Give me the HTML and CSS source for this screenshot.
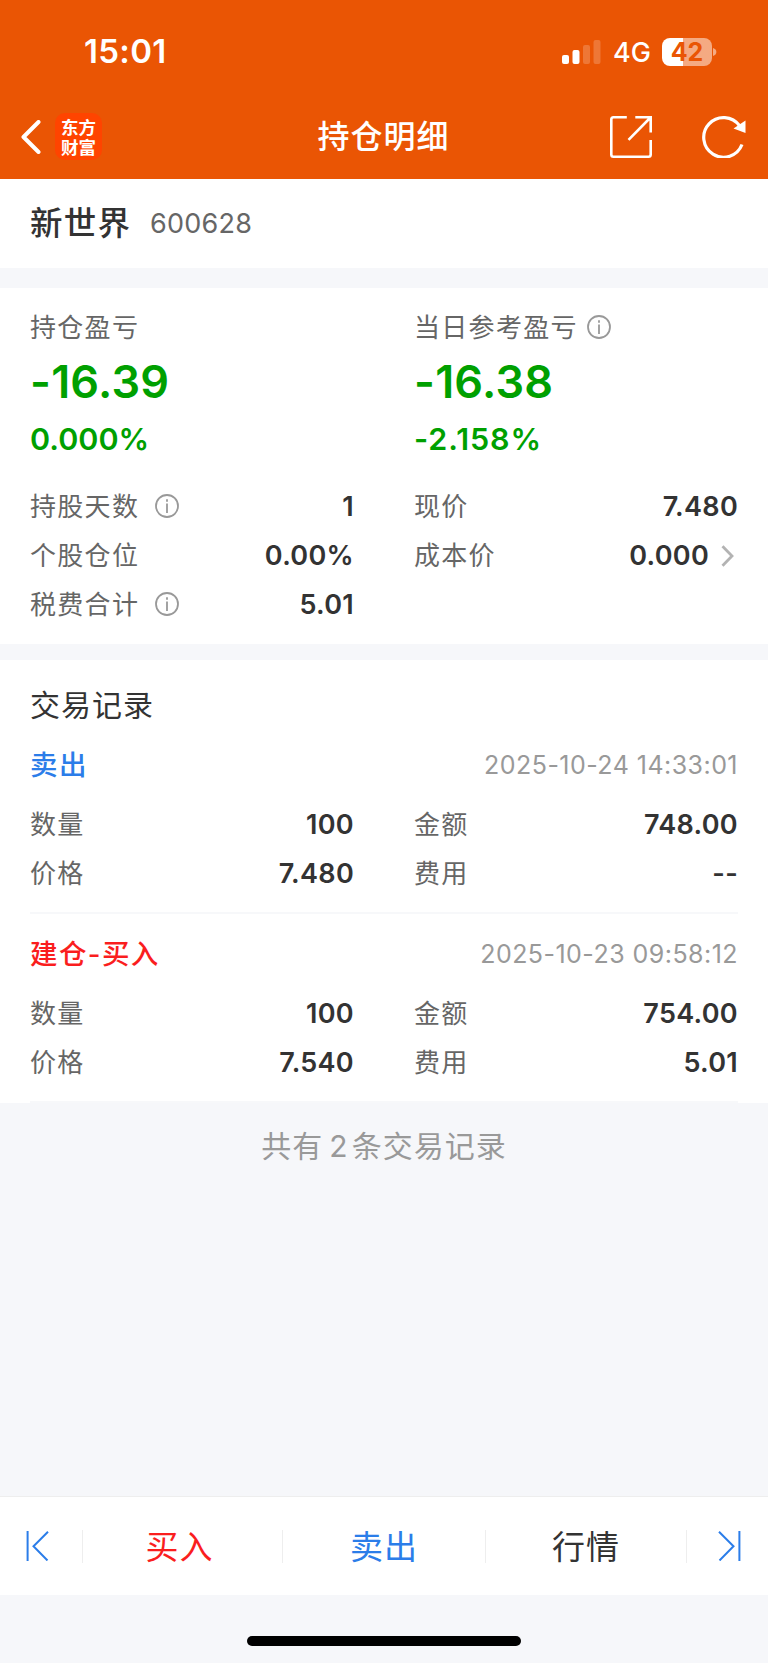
FILE: index.html
```html
<!DOCTYPE html>
<html lang="zh-CN">
<head>
    <meta charset="UTF-8">
    <meta name="viewport" content="width=device-width, initial-scale=1.0">
    <title>持仓明细</title>
    <link rel="stylesheet" href="styles.css">
</head>
<body>
    <header class="header">
        <!-- 状态栏 -->
        <div class="status-bar">
            <span class="time">15:01</span>
            <div class="status-right">
                <svg class="signal" width="39" height="24" viewBox="0 0 39 24" fill="#fff">
                    <rect x="0" y="15" width="7" height="9" rx="2"/>
                    <rect x="10.5" y="10" width="7" height="14" rx="2"/>
                    <rect x="21" y="5" width="7" height="19" rx="2" opacity=".2"/>
                    <rect x="31.5" y="0" width="7" height="24" rx="2" opacity=".2"/>
                </svg>
                <span class="network">4G</span>
                <div class="battery"><span class="battery-num">42</span></div>
                <svg class="battery-tip" width="4" height="8" viewBox="0 0 4 8"><path d="M0 0C4.5 1.2 4.5 6.8 0 8z" fill="#fff" opacity=".5"/></svg>
            </div>
        </div>
        <!-- 导航栏 -->
        <div class="nav-bar">
            <div class="nav-left">
                <svg width="20" height="34" viewBox="0 0 20 34" fill="none" stroke="#fff" stroke-width="4" stroke-linecap="round" stroke-linejoin="round"><path d="M17.5 2L2.5 17l15 15" /></svg>
                <div class="logo"><span>东方</span><span>财富</span></div>
            </div>
            <h1 class="nav-title">持仓明细</h1>
            <div class="nav-right">
                <svg width="42" height="42" viewBox="0 0 42 42" fill="none" stroke="#fff" stroke-width="2.6"><path d="M16.8 1.3H3.5Q1.3 1.3 1.3 3.5v35q0 2.2 2.2 2.2h35q2.2 0 2.2-2.2V24M25.3 1.3h15.4v15.2M40 2L18.5 23.8"/></svg>
                <svg width="44" height="43" viewBox="0 0 44 43" fill="none"><path d="M40 29.5A19.8 19.8 0 1 1 37.6 10.8" stroke="#fff" stroke-width="3.2"/><path d="M43.5 5.5V18L31.5 13.5z" fill="#fff"/></svg>
            </div>
        </div>
    </header>

    <section class="stock">
        <span class="stock-name">新世界</span>
        <span class="stock-code">600628</span>
    </section>

    <section class="summary">
        <div class="columns">
            <div class="profit">
                <div class="label"><span>持仓盈亏</span></div>
                <div class="amount">-16.39</div>
                <div class="percent">0.000%</div>
            </div>
            <div class="profit">
                <div class="label"><span>当日参考盈亏</span><svg class="info near" viewBox="0 0 24 24"><circle cx="12" cy="12" r="11"/><path d="M12 9.5V19M12 5.2v2.6"/></svg></div>
                <div class="amount">-16.38</div>
                <div class="percent today">-2.158%</div>
            </div>
        </div>
        <div class="columns details">
            <div class="row"><span class="label"><span>持股天数</span><svg class="info" viewBox="0 0 24 24"><circle cx="12" cy="12" r="11"/><path d="M12 9.5V19M12 5.2v2.6"/></svg></span><span class="value">1</span></div>
            <div class="row"><span class="label"><span>现价</span></span><span class="value">7.480</span></div>
            <div class="row"><span class="label"><span>个股仓位</span></span><span class="value">0.00%</span></div>
            <div class="row"><span class="label"><span>成本价</span></span><span class="value">0.000<svg class="arrow" width="13" height="22" viewBox="0 0 13 22"><path d="M1.5 1.2L11 11l-9.5 9.8"/></svg></span></div>
            <div class="row"><span class="label"><span>税费合计</span><svg class="info" viewBox="0 0 24 24"><circle cx="12" cy="12" r="11"/><path d="M12 9.5V19M12 5.2v2.6"/></svg></span><span class="value">5.01</span></div>
        </div>
    </section>

    <!-- 交易记录 -->
    <section class="records">
        <h2 class="records-title">交易记录</h2>
        <div class="record">
            <div class="record-head"><span class="type sell">卖出</span><span class="date">2025-10-24 14:33:01</span></div>
            <div class="columns">
                <div class="row"><span class="label"><span>数量</span></span><span class="value">100</span></div>
                <div class="row"><span class="label"><span>金额</span></span><span class="value">748.00</span></div>
                <div class="row"><span class="label"><span>价格</span></span><span class="value">7.480</span></div>
                <div class="row"><span class="label"><span>费用</span></span><span class="value">--</span></div>
            </div>
        </div>
        <div class="record">
            <div class="record-head"><span class="type buy">建仓-买入</span><span class="date">2025-10-23 09:58:12</span></div>
            <div class="columns">
                <div class="row"><span class="label"><span>数量</span></span><span class="value">100</span></div>
                <div class="row"><span class="label"><span>金额</span></span><span class="value">754.00</span></div>
                <div class="row"><span class="label"><span>价格</span></span><span class="value">7.540</span></div>
                <div class="row"><span class="label"><span>费用</span></span><span class="value">5.01</span></div>
            </div>
        </div>
    </section>
    <p class="total">共有<span class="count">2</span>条交易记录</p>

    <!-- 底部操作栏 -->
    <nav class="tab-bar">
        <a class="tab side sell"><svg width="24" height="30" viewBox="0 0 24 30"><path d="M1.6 0v30M22 .8L7.5 15.3 21.5 29.5"/></svg></a>
        <a class="tab first buy"><span>买入</span></a>
        <a class="tab sell"><span>卖出</span></a>
        <a class="tab"><span>行情</span></a>
        <a class="tab side last sell"><svg width="24" height="30" viewBox="0 0 24 30"><path d="M22.4 0v30M2 .8L16.5 15.3 2.5 29.5"/></svg></a>
    </nav>
    <div class="home-area"><div class="home-indicator"></div></div>
</body>
</html>
```
FILE: styles.css
```css
* {
    box-sizing: border-box;
}

body {
    margin: 0;
    min-height: 1663px;
    display: flex;
    flex-direction: column;
    background-color: #f6f7fa;
    color: #333;
    font-family: Inter, "Noto Sans CJK SC", sans-serif;
}

h1, h2, p {
    margin: 0;
    font-weight: normal;
}

svg {
    flex: none;
}

/* 顶部 */
.header {
    height: 179px;
    background-color: #ea5504;
    color: #fff;
}

.status-bar {
    height: 103px;
    padding: 0 51px 0 84px;
    display: flex;
    align-items: center;
    justify-content: space-between;
}

.time {
    padding-bottom: 1px;
    font-size: 33px;
    font-weight: 600;
    letter-spacing: 0.3px;
}

.status-right {
    display: flex;
    align-items: center;
}

.network {
    margin-left: 12px;
    padding-top: 2px;
    width: 37px;
    font-size: 27px;
    font-weight: 500;
    white-space: nowrap;
}

.battery {
    margin-left: 12px;
    width: 50px;
    height: 28px;
    line-height: 28px;
    border-radius: 8px;
    text-align: center;
    background: linear-gradient(to right, #fff 42%, rgba(255, 255, 255, 0.5) 42%);
}

.battery-num {
    color: #ea5504;
    font-size: 25px;
    font-weight: 700;
}

.battery-tip {
    margin-left: 1px;
}

.nav-bar {
    height: 67px;
    padding: 0 22px 0 21px;
    display: grid;
    grid-template-columns: 1fr auto 1fr;
    align-items: center;
}

.nav-left {
    display: flex;
    align-items: center;
    gap: 14px;
}

.logo {
    width: 47px;
    height: 47px;
    display: flex;
    flex-direction: column;
    align-items: center;
    justify-content: center;
    border-radius: 10px;
    background-color: #ff4400;
    font-family: "Noto Sans CJK SC", sans-serif;
    font-size: 17.5px;
    font-weight: 700;
    line-height: 19.5px;
}

.nav-title {
    font-size: 32px;
    font-weight: 500;
    line-height: 40px;
    letter-spacing: 1px;
}

.nav-right {
    display: flex;
    align-items: center;
    justify-content: flex-end;
    gap: 50px;
}

/* 股票名称 */
.stock {
    height: 89px;
    padding: 0 30px;
    display: flex;
    align-items: center;
    background-color: #fff;
}

.stock-name {
    font-size: 32.5px;
    font-weight: 500;
    line-height: 40px;
    letter-spacing: 1.2px;
}

.stock-code {
    margin-left: 19px;
    color: #666;
    font-size: 27px;
    letter-spacing: 0.2px;
}

/* 盈亏汇总 */
.summary {
    height: 356px;
    margin: 20px 0 16px;
    padding: 19px 30px 0;
    background-color: #fff;
}

.columns {
    display: grid;
    grid-template-columns: 1fr 1fr;
    column-gap: 60px;
}

.label {
    display: flex;
    align-items: center;
    height: 40px;
    color: #666;
    font-size: 26px;
    letter-spacing: 1.3px;
}

.label span {
    padding-bottom: 3px;
}

.info {
    width: 24px;
    height: 24px;
    margin-left: 16px;
    fill: none;
    stroke: #999;
    stroke-width: 1.8;
}

.info.near {
    margin-left: 9px;
}

.amount {
    height: 70px;
    line-height: 70px;
    color: #00a000;
    font-size: 45px;
    font-weight: 600;
    letter-spacing: 0.2px;
}

.percent {
    height: 44px;
    line-height: 44px;
    color: #00a000;
    font-size: 30.5px;
    font-weight: 600;
}

.percent.today {
    letter-spacing: 0.9px;
}

.details {
    margin-top: 20px;
}

.row {
    height: 49px;
    display: flex;
    align-items: center;
    justify-content: space-between;
}

.value {
    padding-top: 2px;
    display: flex;
    align-items: center;
    font-size: 27px;
    font-weight: 600;
    letter-spacing: 0.3px;
}

.arrow {
    margin: 0 4px 0 12px;
    fill: none;
    stroke: #b3b3b3;
    stroke-width: 2.8;
}

/* 交易记录 */
.records {
    padding: 26px 30px 0;
    background-color: #fff;
}

.records-title {
    height: 39px;
    line-height: 38px;
    font-size: 30px;
    letter-spacing: 1px;
}

.record {
    height: 189px;
    padding-top: 4px;
    border-bottom: 2px solid #f7f8fa;
}

.record-head {
    height: 70px;
    display: flex;
    align-items: center;
    justify-content: space-between;
}

.type {
    padding-bottom: 2px;
    font-size: 27.5px;
    font-weight: 500;
    letter-spacing: 1.4px;
}

.date {
    padding-top: 1px;
    color: #999;
    font-size: 25px;
    letter-spacing: 0.46px;
}

.sell {
    color: #2b7de9;
}

.buy {
    color: #fa1e1e;
}

.total {
    margin-top: 23px;
    height: 40px;
    line-height: 40px;
    text-align: center;
    color: #999;
    font-size: 30px;
    letter-spacing: 1px;
}

.count {
    margin: 0 3px 0 6px;
}

/* 底部 */
.tab-bar {
    height: 99px;
    margin-top: auto;
    display: grid;
    grid-template-columns: 83px 200px 203px 201px 81px;
    align-items: center;
    border-top: 1px solid #eee;
    background-color: #fff;
}

.tab {
    height: 33px;
    display: flex;
    align-items: center;
    justify-content: center;
    border-right: 1px solid #eee;
    font-size: 33px;
    letter-spacing: 1px;
}

.tab span {
    padding-bottom: 3px;
}

.tab.first {
    padding-right: 6px;
}

.side {
    padding-right: 6px;
}

.side.last {
    padding: 0 0 0 3px;
    border-right: none;
}

.side svg {
    fill: none;
    stroke: #2b7de9;
    stroke-width: 2;
}

.home-area {
    height: 68px;
    padding-top: 41px;
}

.home-indicator {
    width: 274px;
    height: 10px;
    margin: 0 auto;
    border-radius: 5px;
    background-color: #000;
}
```
